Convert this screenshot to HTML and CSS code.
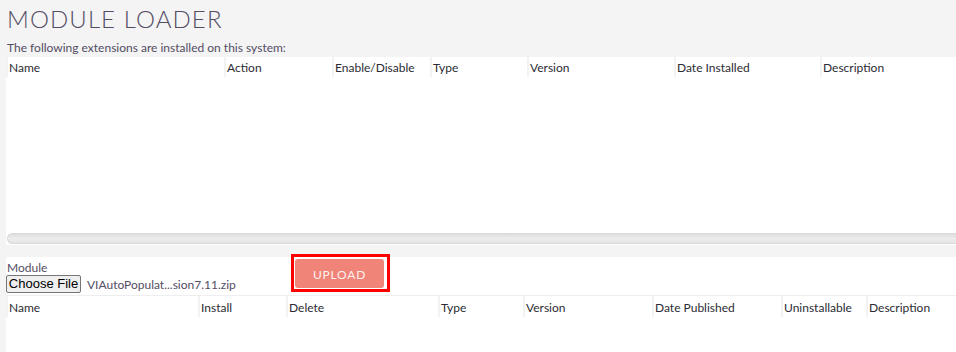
FILE: index.html
```html
<!DOCTYPE html>
<html>
<head>
<meta charset="utf-8">
<link rel="stylesheet" href="styles.css">
</head>
<body>
<div class="page">
  <h2 class="title">MODULE LOADER</h2>
  <p class="intro">The following extensions are installed on this system:</p>
  <div class="panel installed">
    <div class="thead">
      <div class="th" style="width:218px">Name</div>
      <div class="th" style="width:108px">Action</div>
      <div class="th" style="width:98px">Enable/Disable</div>
      <div class="th" style="width:97px">Type</div>
      <div class="th" style="width:147px">Version</div>
      <div class="th" style="width:146px">Date Installed</div>
      <div class="th" style="width:160px">Description</div>
    </div>
    <div class="tbody"></div>
    <div class="scrollbar"></div>
  </div>
  <div class="upload-form">
    <div class="file-col">
      <label class="label">Module</label>
      <div class="file-row">
        <button class="choose">Choose File</button>
        <span class="filename">VIAutoPopulat...sion7.11.zip</span>
      </div>
    </div>
    <div class="highlight">
      <button class="upload">UPLOAD</button>
    </div>
  </div>
  <div class="panel available">
    <div class="thead">
      <div class="th" style="width:192px">Name</div>
      <div class="th" style="width:88px">Install</div>
      <div class="th" style="width:152px">Delete</div>
      <div class="th" style="width:85px">Type</div>
      <div class="th" style="width:129px">Version</div>
      <div class="th" style="width:129px">Date Published</div>
      <div class="th" style="width:85px">Uninstallable</div>
      <div class="th" style="width:120px">Description</div>
    </div>
    <div class="tbody2"></div>
  </div>
</div>
</body>
</html>
```
FILE: styles.css
```css
html, body {
  margin: 0;
  padding: 0;
  background: #f4f4f4;
  overflow: hidden;
}
.page {
  width: 956px;
  height: 352px;
  padding-left: 6px;
  box-sizing: border-box;
  font-family: Lato, "Open Sans", sans-serif;
  color: #534d64;
  overflow: hidden;
}
.title {
  margin: 0;
  padding: 5px 0 0 1px;
  height: 37px;
  box-sizing: border-box;
  font-weight: 300;
  font-size: 24px;
  letter-spacing: 1.1px;
  line-height: 28px;
  color: #534d64;
}
.intro {
  margin: 0;
  padding: 4px 0 0 1px;
  height: 20px;
  box-sizing: border-box;
  font-size: 12px;
  line-height: 14px;
}
.panel {
  background: #fff;
  width: 950px;
}
.thead {
  display: flex;
  white-space: nowrap;
}
.th {
  box-sizing: border-box;
  flex: none;
  height: 20px;
  border-left: 2px solid #f2f2f2;
  padding: 3px 0 0 1px;
  font-size: 12px;
  line-height: 16px;
  color: #2b2b33;
}
.installed {
  height: 188px;
  display: flex;
  flex-direction: column;
}
.installed .tbody {
  flex: 1;
}
.scrollbar {
  height: 9px;
  margin: 0 0 1px 1px;
  border: 1px solid #d9d9d9;
  border-right: none;
  border-radius: 6px 0 0 6px;
  background: linear-gradient(#dedede, #ececec 50%, #e4e4e4);
}
.upload-form {
  margin-top: 12px;
  background: #fff;
  height: 38px;
  display: flex;
  align-items: flex-start;
}
.file-col {
  width: 285px;
  flex: none;
  padding-top: 4px;
}
.label {
  display: block;
  font-size: 12px;
  line-height: 14px;
  padding-left: 1px;
  color: #534d64;
}
.file-row {
  display: flex;
  align-items: center;
  margin-top: 0;
}
.choose {
  font-family: "Liberation Sans", Arial, sans-serif;
  font-size: 13px;
  height: 18px;
  width: 75px;
  padding: 0;
  margin: 0;
  border: 1px solid #767676;
  border-radius: 2px;
  background: #efefef;
  color: #000;
  line-height: 16px;
}
.filename {
  margin-left: 6px;
  font-size: 12px;
  color: #534d64;
}
.highlight {
  margin-top: -3px;
  border: 3px solid #ff0000;
  padding: 2px 3px 1px 1px;
  background: #fff;
}
.upload {
  display: block;
  width: 89px;
  height: 29px;
  border: none;
  border-radius: 3px;
  background: #f08478;
  color: #fdf0ee;
  font-family: Lato, sans-serif;
  font-size: 12px;
  letter-spacing: 0.8px;
  padding: 2px 0 0;
}
.available {
  border-top: 1px solid #eeeeee;
  height: 60px;
}
.available .th {
  height: 21px;
  padding-top: 4px;
}
```
